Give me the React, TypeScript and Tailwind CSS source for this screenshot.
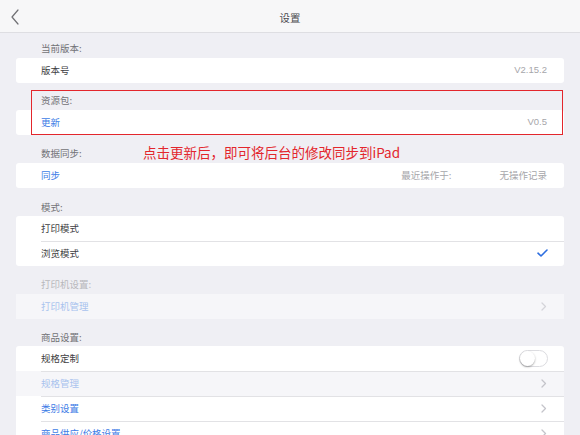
import React from "react";

const font = { fontFamily: '"Noto Sans CJK SC", "Noto Sans", sans-serif' };

function T({ children, className = "", right }: { children: React.ReactNode; className?: string; right?: boolean }) {
  return (
    <span className={`inline-block whitespace-nowrap text-[12px] leading-[12px] scale-[0.79] ${right ? "origin-right" : "origin-left"} ${className}`}>
      {children}
    </span>
  );
}

function Chevron({ light }: { light?: boolean }) {
  return (
    <svg width="6" height="9" viewBox="0 0 6 9" className="shrink-0">
      <path d="M1 1 L4.5 4.5 L1 8" fill="none" stroke={light ? "#d4d4da" : "#c4c4ca"} strokeWidth="1.3" strokeLinecap="round" strokeLinejoin="round" />
    </svg>
  );
}

function Label({ text, pt, pb, light }: { text: string; pt: string; pb: string; light?: boolean }) {
  return (
    <div className={`pl-[25px] ${pt} ${pb} leading-[12px] flex`}>
      <T className={light ? "text-[#b8b8bc]" : "text-[#727276]"}>{text}</T>
    </div>
  );
}

function Row({ children, sep, disabled }: { children: React.ReactNode; sep?: boolean; disabled?: boolean }) {
  return (
    <div className={`relative h-[25px] flex items-center ${disabled ? "bg-[#f6f6f9]" : ""}`}>
      {sep && <div className="absolute top-0 left-[25px] right-0 h-px bg-[#e2e2e5]" />}
      <div className="flex-1 flex items-center ml-[25px] mr-[17px] -mt-px">{children}</div>
    </div>
  );
}

export default function App() {
  return (
    <div className="relative w-[580px] h-[435px] overflow-hidden bg-[#efeff4]" style={font}>
      <div className="h-[33px] bg-[#f7f7f8] border-b border-[#dedee2] flex items-center justify-center relative">
        <svg width="10" height="16" viewBox="0 0 10 16" className="absolute left-[10px] top-[9px]">
          <path d="M8 1 L2 8 L8 15" fill="none" stroke="#707074" strokeWidth="1.2" strokeLinecap="round" strokeLinejoin="round" />
        </svg>
        <span className="inline-block text-[12px] leading-[12px] scale-[0.87] origin-center text-[#4a4a4f] mt-[3px]">设置</span>
      </div>

      <div className="px-[16px]">
        <Label text="当前版本:" pt="pt-[9px]" pb="pb-[4px]" />
        <div className="bg-white rounded-[3px]">
          <Row>
            <T className="text-[#3e3e42]">版本号</T>
            <span className="ml-auto text-[9.5px] text-[#a6a6aa]" style={{ fontFamily: '"Liberation Sans", sans-serif' }}>V2.15.2</span>
          </Row>
        </div>

        <Label text="资源包:" pt="pt-[11px]" pb="pb-[4px]" />
        <div className="bg-white rounded-[3px]">
          <Row>
            <T className="text-[#3d7ce6]">更新</T>
            <span className="ml-auto text-[9.5px] text-[#a6a6aa]" style={{ fontFamily: '"Liberation Sans", sans-serif' }}>V0.5</span>
          </Row>
        </div>

        <Label text="数据同步:" pt="pt-[12px]" pb="pb-[4px]" />
        <div className="bg-white rounded-[3px]">
          <Row>
            <T className="text-[#3d7ce6]">同步</T>
            <T right className="ml-auto mr-[36px] text-[#a6a6aa]">最近操作于:</T>
            <T right className="text-[#a6a6aa]">无操作记录</T>
          </Row>
        </div>

        <Label text="模式:" pt="pt-[13px]" pb="pb-[3px]" />
        <div className="bg-white rounded-[3px]">
          <Row>
            <T className="text-[#3e3e42]">打印模式</T>
          </Row>
          <Row sep>
            <T className="text-[#3e3e42]">浏览模式</T>
            <svg width="11" height="8" viewBox="0 0 11 8" className="ml-auto mr-[-1px]">
              <path d="M1 4.2 L4 7 L10 1" fill="none" stroke="#2d6ee0" strokeWidth="1.6" strokeLinecap="round" strokeLinejoin="round" />
            </svg>
          </Row>
        </div>

        <Label text="打印机设置:" pt="pt-[12px]" pb="pb-[4px]" light />
        <div className="bg-[#f6f6f9] rounded-[3px]">
          <Row disabled>
            <T className="text-[#a9c3ee]">打印机管理</T>
            <span className="ml-auto"><Chevron light /></span>
          </Row>
        </div>

        <Label text="商品设置:" pt="pt-[12px]" pb="pb-[3px]" />
        <div className="bg-white rounded-[3px] overflow-hidden">
          <Row>
            <T className="text-[#3e3e42]">规格定制</T>
            <div className="ml-auto mr-[-1px] w-[29px] h-[17px] rounded-full border border-[#dcdce0] bg-white relative">
              <div className="absolute left-0 top-0 w-[15px] h-[15px] rounded-full bg-white shadow-[0_1px_2px_rgba(0,0,0,0.35)]" />
            </div>
          </Row>
          <Row sep disabled>
            <T className="text-[#a9c3ee]">规格管理</T>
            <span className="ml-auto"><Chevron /></span>
          </Row>
          <Row sep>
            <T className="text-[#3d7ce6]">类别设置</T>
            <span className="ml-auto"><Chevron /></span>
          </Row>
          <Row sep>
            <T className="text-[#3d7ce6]">商品供应/价格设置</T>
            <span className="ml-auto"><Chevron /></span>
          </Row>
        </div>
      </div>

      <div className="absolute left-[31px] top-[90px] w-[532px] h-[45px] border-[1.5px] border-[#e3262c]" />
      <div className="absolute left-[143px] top-[142px] text-[13.5px] leading-[20px] text-[#e3262c]">点击更新后，即可将后台的修改同步到iPad</div>
    </div>
  );
}
